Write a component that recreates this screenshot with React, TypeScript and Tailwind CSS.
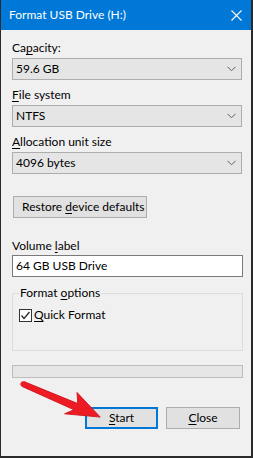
import React from "react";

const font = { fontFamily: "Lato, 'Liberation Sans', sans-serif" };

function Chevron() {
  return (
    <svg width="9" height="6" viewBox="0 0 9 6" className="shrink-0">
      <polyline points="0.5,0.8 4.5,4.8 8.5,0.8" fill="none" stroke="#606060" strokeWidth="1" />
    </svg>
  );
}

function Select({ value }: { value: string }) {
  return (
    <div className="h-[22px] w-[230px] border border-[#adadad] bg-[#e5e5e5] flex items-center justify-between pl-[3px] pr-[5px] text-[12px] text-black">
      <span>{value}</span>
      <Chevron />
    </div>
  );
}

function Label({ children, className = "" }: { children: React.ReactNode; className?: string }) {
  return <div className={`h-[16px] leading-[16px] text-[12px] text-black ${className}`}>{children}</div>;
}

function U({ children }: { children: React.ReactNode }) {
  return <span className="underline underline-offset-[2px]">{children}</span>;
}

export default function App() {
  return (
    <div
      className="relative w-[253px] h-[458px] bg-[#f0f0f0] border-l border-r-2 border-b-2 border-[#2a2a2a] overflow-hidden"
      style={font}
    >
      <div className="h-[30px] bg-[#0078d7] flex items-center justify-between pl-[8px] pr-[9px] text-white text-[12px]">
        <span>Format USB Drive (H:)</span>
        <svg width="11" height="11" viewBox="0 0 11 11">
          <path d="M0.5 0.5 L10.5 10.5 M10.5 0.5 L0.5 10.5" stroke="#fff" strokeWidth="1.1" />
        </svg>
      </div>
      <div className="flex flex-col pl-[11px] pr-[9px]">
        <Label className="mt-[10px]">
          Ca<U>p</U>acity:
        </Label>
        <div className="mt-[2px]">
          <Select value="59.6 GB" />
        </div>
        <Label className="mt-[7px]">
          <U>F</U>ile system
        </Label>
        <div className="mt-[2px]">
          <Select value="NTFS" />
        </div>
        <Label className="mt-[7px]">
          <U>A</U>llocation unit size
        </Label>
        <div className="mt-[2px]">
          <Select value="4096 bytes" />
        </div>
        <button className="mt-[22px] ml-[1px] h-[22px] w-[134px] border border-[#adadad] bg-[#e1e1e1] text-[12px] text-black text-left pl-[8px]">
          Restore <U>d</U>evice defaults
        </button>
        <Label className="mt-[20px]">
          Volume <U>l</U>abel
        </Label>
        <div className="mt-[1px] h-[22px] w-[231px] border border-[#7a7a7a] bg-white flex items-center pl-[3px] text-[12px] text-black">
          64 GB USB Drive
        </div>
        <fieldset className="mt-[8px] h-[66px] w-[231px] border border-[#dcdcdc] rounded-none">
          <legend className="ml-[6px] px-[1px] h-[16px] leading-[16px] text-[12px] text-black">
            Format <U>o</U>ptions
          </legend>
          <div className="mt-[6px] ml-[6px] flex items-center gap-[2px] text-[12px] text-black">
            <div className="w-[13px] h-[13px] border border-[#333333] bg-white flex items-center justify-center">
              <svg width="11" height="11" viewBox="0 0 11 11">
                <polyline points="1.5,5.5 4,8.5 9.5,2" fill="none" stroke="#222" strokeWidth="1.2" />
              </svg>
            </div>
            <span className="leading-[16px]">
              <U>Q</U>uick Format
            </span>
          </div>
        </fieldset>
        <div className="mt-[14px] h-[13px] w-[231px] border border-[#bcbcbc] bg-[#e6e6e6]" />
        <div className="mt-[29px] flex justify-end gap-[8px] pr-[2px]">
          <button className="h-[22px] w-[73px] border-2 border-[#0078d7] bg-[#e1e1e1] text-[12px] text-black">
            <U>S</U>tart
          </button>
          <button className="h-[22px] w-[74px] border border-[#adadad] bg-[#e1e1e1] text-[12px] text-black">
            <U>C</U>lose
          </button>
        </div>
      </div>
      <svg className="absolute left-0 top-0 pointer-events-none" width="253" height="458" viewBox="0 0 253 458">
        <g transform="translate(22 384) rotate(23.2)">
          <path
            d="M0 -2.6 L58 -3.6 L53 -13.5 L84 0 L50 11 L57 3.6 L0 2.6 Z"
            fill="#ed1c24"
            stroke="#d0121b"
            strokeWidth="0.8"
            strokeLinejoin="round"
          />
          <circle cx="0" cy="0" r="2.6" fill="#ed1c24" />
        </g>
      </svg>
    </div>
  );
}
